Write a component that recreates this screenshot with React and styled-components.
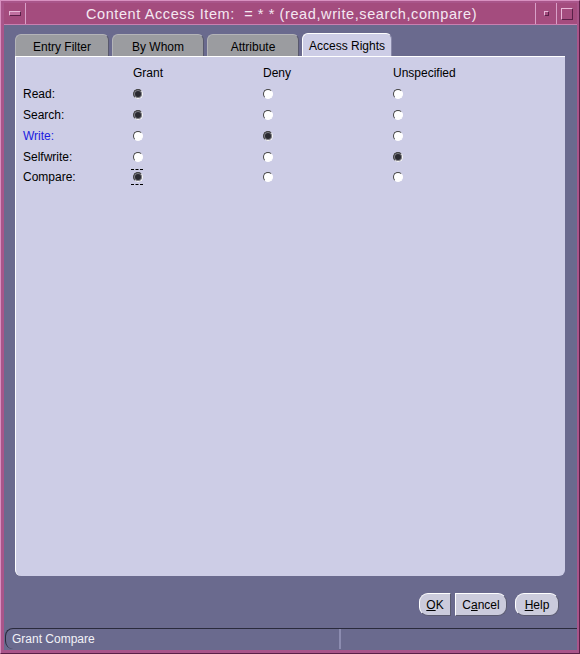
import React from 'react';
import styled, { createGlobalStyle } from 'styled-components';

const Global = createGlobalStyle`
	html, body {
		margin: 0;
		padding: 0;
		background: #6a6a8e;
	}
	body {
		font-family: "Liberation Sans", Arial, sans-serif;
		font-size: 12px;
	}
`

const Frame = styled.div`
	width: 580px;
	height: 654px;
	box-sizing: border-box;
	display: flex;
	flex-direction: column;
	background: #a9558a;
	border: 1px solid #5a2048;
	border-top-color: #d890c0;
	border-left-color: #d890c0;
	padding: 2px 2px 3px 3px;
`

const TitleBar = styled.div`
	height: 23px;
	display: flex;
	align-items: stretch;
	background: #a44c7e;
	border-bottom: 1px solid #c880b0;
`

const WinButton = styled.div`
	width: ${p => p.w || 20}px;
	display: flex;
	align-items: center;
	justify-content: center;
	border-left: ${p => (p.left ? 'none' : '1px solid #d8a0c8')};
	border-right: ${p => (p.left ? '1px solid #d8a0c8' : 'none')};
`

const MenuBar = styled.span`
	width: 10px;
	height: 3px;
	background: #c070a0;
	border: 1px solid #e8b8d8;
	border-bottom-color: #5a2048;
	border-right-color: #5a2048;
`

const MinBox = styled.span`
	width: 3px;
	height: 3px;
	border: 1px solid #e8b8d8;
	border-bottom-color: #5a2048;
	border-right-color: #5a2048;
`

const MaxBox = styled.span`
	width: 10px;
	height: 10px;
	border: 1px solid #e8b8d8;
	border-bottom-color: #5a2048;
	border-right-color: #5a2048;
`

const Title = styled.div`
	flex: 1;
	display: flex;
	align-items: center;
	justify-content: center;
	color: #f4e8f2;
	font-size: 14.5px;
	letter-spacing: 0.6px;
	padding-left: 2px;
`

const Body = styled.div`
	flex: 1;
	display: flex;
	flex-direction: column;
	background: #6a6a8e;
`

const Content = styled.div`
	flex: 1;
	display: flex;
	flex-direction: column;
	padding: 8px 12px 0 11px;
`

const Tabs = styled.div`
	display: flex;
	align-items: flex-end;
	gap: 3px;
	height: 23px;
`

const Tab = styled.div`
	width: ${p => p.w}px;
	height: ${p => (p.active ? 23 : 22)}px;
	box-sizing: border-box;
	display: flex;
	align-items: center;
	justify-content: center;
	padding-top: 2px;
	background: ${p => (p.active ? '#cdcde6' : '#9b9ca0')};
	color: #000;
	border-radius: 6px 6px 0 0;
	border-top: 1px solid ${p => (p.active ? '#ffffff' : '#b4b4b8')};
	border-left: 1px solid ${p => (p.active ? '#ffffff' : '#b4b4b8')};
	border-right: 1px solid ${p => (p.active ? '#8888a8' : '#58586c')};
`

const Panel = styled.div`
	height: 520px;
	box-sizing: border-box;
	background: #cdcde6;
	border-top: 1px solid #ffffff;
	border-left: 1px solid #ffffff;
	border-radius: 0 0 6px 6px;
	padding: 6px 8px 5px 7px;
`

const Grid = styled.div`
	display: grid;
	grid-template-columns: 110px 130px 130px 1fr;
	grid-auto-rows: 20.8px;
	align-items: center;
`

const Head = styled.div`
	color: #000;
`

const Label = styled.div`
	color: ${p => (p.blue ? '#1c1ce0' : '#000')};
`

const Cell = styled.div`
	display: flex;
	align-items: center;
`

const Radio = styled.span`
	position: relative;
	width: 10px;
	height: 10px;
	box-sizing: border-box;
	border-radius: 50%;
	border: 1px solid;
	border-color: #444 #fff #fff #444;
	background: ${p => (p.on ? '#2a2a30' : '#ffffff')};
	box-shadow: ${p => (p.on ? 'inset 0 0 0 1px #808088' : 'none')};

	${p => p.focus && `
		&::before, &::after {
			content: '';
			position: absolute;
			left: -3px;
			width: 12px;
			border-top: 1px dashed #000;
		}
		&::before { top: -4px; }
		&::after { bottom: -4px; }
	`}
`

const ButtonRow = styled.div`
	display: flex;
	justify-content: flex-end;
	align-items: center;
	height: 23px;
	margin-top: 17px;
	padding-right: 6px;
`

const Btn = styled.button`
	height: 23px;
	width: ${p => p.w}px;
	font-family: "Liberation Sans", Arial, sans-serif;
	font-size: 12px;
	color: #000;
	background: #cbcbdc;
	border: 1px solid;
	border-color: #ffffff #5a5a70 #5a5a70 #ffffff;
	border-radius: ${p => p.r};
	margin-left: ${p => p.ml || 0}px;
	padding: 0;
	u { text-decoration: underline; }
`

const Status = styled.div`
	height: 20px;
	margin: 12px 0 1px 1px;
	display: flex;
	color: #f2f2f8;
	border-top: 1px solid #2a2a3c;
	border-left: 1px solid #2a2a3c;
	border-radius: 8px 0 0 8px;
`

const StatusCell = styled.div`
	display: flex;
	align-items: center;
	width: ${p => (p.w ? p.w + 'px' : 'auto')};
	flex: ${p => (p.w ? 'none' : 1)};
	padding-left: 6px;
	border-right: ${p => (p.w ? '2px solid #8c8cb0' : 'none')};
`

const rows = [
	{ label: 'Read:', pick: 0 },
	{ label: 'Search:', pick: 0 },
	{ label: 'Write:', pick: 1, blue: true },
	{ label: 'Selfwrite:', pick: 2 },
	{ label: 'Compare:', pick: 0, focus: true },
]

export default function App() {
	return (
		<>
			<Global />
			<Frame>
				<TitleBar>
					<WinButton left w={21}><MenuBar /></WinButton>
					<Title>Content Access Item:&nbsp; = * * (read,write,search,compare)</Title>
					<WinButton w={20}><MinBox /></WinButton>
					<WinButton w={20}><MaxBox /></WinButton>
				</TitleBar>
				<Body>
					<Content>
						<Tabs>
							<Tab w={94}>Entry Filter</Tab>
							<Tab w={92}>By Whom</Tab>
							<Tab w={92}>Attribute</Tab>
							<Tab w={90} active>Access Rights</Tab>
						</Tabs>
						<Panel>
							<Grid>
								<div />
								<Head>Grant</Head>
								<Head>Deny</Head>
								<Head>Unspecified</Head>
								{rows.map(r => (
									<React.Fragment key={r.label}>
										<Label blue={r.blue}>{r.label}</Label>
										{[0, 1, 2].map(i => (
											<Cell key={i}>
												<Radio on={r.pick === i} focus={r.focus && i === 0} />
											</Cell>
										))}
									</React.Fragment>
								))}
							</Grid>
						</Panel>
						<ButtonRow>
							<Btn w={32} r="9px 0 0 9px"><u>O</u>K</Btn>
							<Btn w={52} r="0 9px 9px 0" ml={4}>C<u>a</u>ncel</Btn>
							<Btn w={44} r="9px" ml={8}><u>H</u>elp</Btn>
						</ButtonRow>
					</Content>
					<Status>
						<StatusCell w={327}>Grant Compare</StatusCell>
						<StatusCell />
					</Status>
				</Body>
			</Frame>
		</>
	)
}
